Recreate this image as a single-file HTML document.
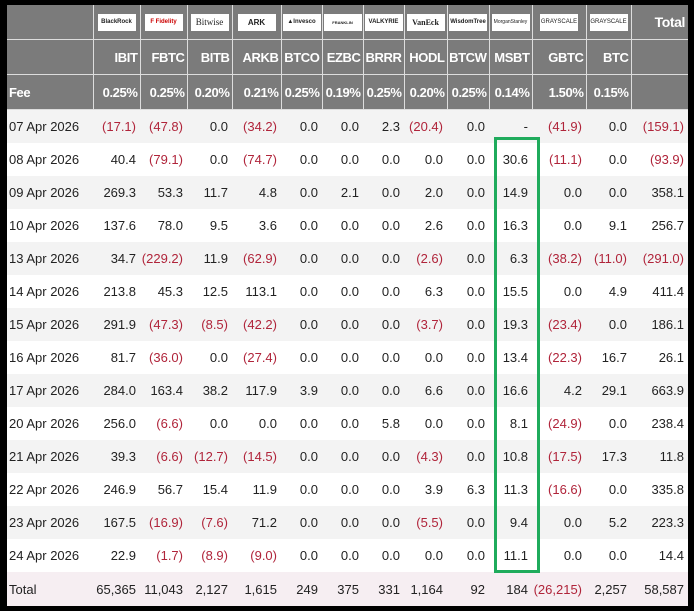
<!DOCTYPE html><html><head><style>
body{margin:0;background:#000;width:694px;height:611px;overflow:hidden;font-family:"Liberation Sans",Arial,sans-serif}
.wrap{position:absolute;left:7px;top:5px;width:681px;height:601px;background:#fff;overflow:hidden}
table{border-collapse:collapse;table-layout:fixed;width:681px}
td{padding:0 4px 0 0;text-align:right;font-size:13px;color:#222;height:33px;white-space:nowrap;overflow:hidden}
td:first-child{text-align:left;padding-left:2px}
tr.h td{background:#7b7b7b;color:#fff;font-weight:bold;font-size:13px;letter-spacing:-0.4px;border-left:1px solid #ddd;border-bottom:1px solid #ddd;height:34px;padding-right:2px}
tr.h td:first-child{border-left:none}
tr.logo td{text-align:center;padding:0}
.lg{display:inline-block;background:#fff;height:17px;width:38px;font-size:6px;line-height:17px;color:#222;font-weight:bold;vertical-align:middle;letter-spacing:0}
tr:nth-child(even) td{background:#f3f3f3}
tr.h:nth-child(even) td{background:#7b7b7b}
.r{color:#b0243a}
tr.tot td{background:#f6eef2;height:34px}
.box{position:absolute;left:487px;top:132px;width:40px;height:430px;border:3px solid #1fab5c}
</style></head><body><div class="wrap">
<table>
<colgroup><col style="width:86px"><col style="width:47px"><col style="width:47px"><col style="width:45px"><col style="width:49px"><col style="width:41px"><col style="width:41px"><col style="width:41px"><col style="width:43px"><col style="width:42px"><col style="width:43px"><col style="width:54px"><col style="width:45px"><col style="width:57px"></colgroup>
<tr class="h logo"><td></td><td><span class="lg">BlackRock</span></td><td><span class="lg" style="color:#c00">F Fidelity</span></td><td><span class="lg" style="font-size:9px;font-family:'Liberation Serif';font-weight:normal">Bitwise</span></td><td><span class="lg" style="font-size:8px">ARK</span></td><td><span class="lg">▲Invesco</span></td><td><span class="lg" style="font-size:4px">FRANKLIN</span></td><td><span class="lg">VALKYRIE</span></td><td><span class="lg" style="font-size:8px;font-family:'Liberation Serif'">VanEck</span></td><td><span class="lg">WisdomTree</span></td><td><span class="lg" style="font-weight:normal;font-size:5px">MorganStanley</span></td><td><span class="lg" style="font-weight:normal">GRAYSCALE</span></td><td><span class="lg" style="font-weight:normal">GRAYSCALE</span></td><td style="text-align:right;padding-right:3px;font-size:14px">Total</td></tr>
<tr class="h"><td></td><td>IBIT</td><td>FBTC</td><td>BITB</td><td>ARKB</td><td>BTCO</td><td>EZBC</td><td>BRRR</td><td>HODL</td><td>BTCW</td><td>MSBT</td><td>GBTC</td><td>BTC</td><td></td></tr>
<tr class="h"><td>Fee</td><td>0.25%</td><td>0.25%</td><td>0.20%</td><td>0.21%</td><td>0.25%</td><td>0.19%</td><td>0.25%</td><td>0.20%</td><td>0.25%</td><td>0.14%</td><td>1.50%</td><td>0.15%</td><td></td></tr>
<tr><td>07 Apr 2026</td><td class="r">(17.1)</td><td class="r">(47.8)</td><td>0.0</td><td class="r">(34.2)</td><td>0.0</td><td>0.0</td><td>2.3</td><td class="r">(20.4)</td><td>0.0</td><td>-</td><td class="r">(41.9)</td><td>0.0</td><td class="r">(159.1)</td></tr>
<tr><td>08 Apr 2026</td><td>40.4</td><td class="r">(79.1)</td><td>0.0</td><td class="r">(74.7)</td><td>0.0</td><td>0.0</td><td>0.0</td><td>0.0</td><td>0.0</td><td>30.6</td><td class="r">(11.1)</td><td>0.0</td><td class="r">(93.9)</td></tr>
<tr><td>09 Apr 2026</td><td>269.3</td><td>53.3</td><td>11.7</td><td>4.8</td><td>0.0</td><td>2.1</td><td>0.0</td><td>2.0</td><td>0.0</td><td>14.9</td><td>0.0</td><td>0.0</td><td>358.1</td></tr>
<tr><td>10 Apr 2026</td><td>137.6</td><td>78.0</td><td>9.5</td><td>3.6</td><td>0.0</td><td>0.0</td><td>0.0</td><td>2.6</td><td>0.0</td><td>16.3</td><td>0.0</td><td>9.1</td><td>256.7</td></tr>
<tr><td>13 Apr 2026</td><td>34.7</td><td class="r">(229.2)</td><td>11.9</td><td class="r">(62.9)</td><td>0.0</td><td>0.0</td><td>0.0</td><td class="r">(2.6)</td><td>0.0</td><td>6.3</td><td class="r">(38.2)</td><td class="r">(11.0)</td><td class="r">(291.0)</td></tr>
<tr><td>14 Apr 2026</td><td>213.8</td><td>45.3</td><td>12.5</td><td>113.1</td><td>0.0</td><td>0.0</td><td>0.0</td><td>6.3</td><td>0.0</td><td>15.5</td><td>0.0</td><td>4.9</td><td>411.4</td></tr>
<tr><td>15 Apr 2026</td><td>291.9</td><td class="r">(47.3)</td><td class="r">(8.5)</td><td class="r">(42.2)</td><td>0.0</td><td>0.0</td><td>0.0</td><td class="r">(3.7)</td><td>0.0</td><td>19.3</td><td class="r">(23.4)</td><td>0.0</td><td>186.1</td></tr>
<tr><td>16 Apr 2026</td><td>81.7</td><td class="r">(36.0)</td><td>0.0</td><td class="r">(27.4)</td><td>0.0</td><td>0.0</td><td>0.0</td><td>0.0</td><td>0.0</td><td>13.4</td><td class="r">(22.3)</td><td>16.7</td><td>26.1</td></tr>
<tr><td>17 Apr 2026</td><td>284.0</td><td>163.4</td><td>38.2</td><td>117.9</td><td>3.9</td><td>0.0</td><td>0.0</td><td>6.6</td><td>0.0</td><td>16.6</td><td>4.2</td><td>29.1</td><td>663.9</td></tr>
<tr><td>20 Apr 2026</td><td>256.0</td><td class="r">(6.6)</td><td>0.0</td><td>0.0</td><td>0.0</td><td>0.0</td><td>5.8</td><td>0.0</td><td>0.0</td><td>8.1</td><td class="r">(24.9)</td><td>0.0</td><td>238.4</td></tr>
<tr><td>21 Apr 2026</td><td>39.3</td><td class="r">(6.6)</td><td class="r">(12.7)</td><td class="r">(14.5)</td><td>0.0</td><td>0.0</td><td>0.0</td><td class="r">(4.3)</td><td>0.0</td><td>10.8</td><td class="r">(17.5)</td><td>17.3</td><td>11.8</td></tr>
<tr><td>22 Apr 2026</td><td>246.9</td><td>56.7</td><td>15.4</td><td>11.9</td><td>0.0</td><td>0.0</td><td>0.0</td><td>3.9</td><td>6.3</td><td>11.3</td><td class="r">(16.6)</td><td>0.0</td><td>335.8</td></tr>
<tr><td>23 Apr 2026</td><td>167.5</td><td class="r">(16.9)</td><td class="r">(7.6)</td><td>71.2</td><td>0.0</td><td>0.0</td><td>0.0</td><td class="r">(5.5)</td><td>0.0</td><td>9.4</td><td>0.0</td><td>5.2</td><td>223.3</td></tr>
<tr><td>24 Apr 2026</td><td>22.9</td><td class="r">(1.7)</td><td class="r">(8.9)</td><td class="r">(9.0)</td><td>0.0</td><td>0.0</td><td>0.0</td><td>0.0</td><td>0.0</td><td>11.1</td><td>0.0</td><td>0.0</td><td>14.4</td></tr>
<tr class="tot"><td>Total</td><td>65,365</td><td>11,043</td><td>2,127</td><td>1,615</td><td>249</td><td>375</td><td>331</td><td>1,164</td><td>92</td><td>184</td><td class="r">(26,215)</td><td>2,257</td><td>58,587</td></tr>
</table>
<div class="box"></div>
</div></body></html>
